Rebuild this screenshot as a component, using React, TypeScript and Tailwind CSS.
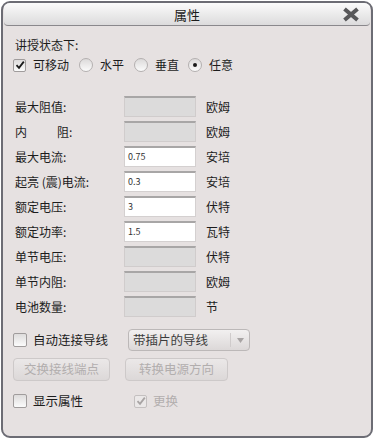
import type { ReactNode } from 'react'

const font = { fontFamily: '"Noto Sans CJK SC", "Noto Sans", sans-serif' }

type Field = {
  label: ReactNode
  value?: string
  unit: string
}

const fields: Field[] = [
  { label: '最大阻值:', unit: '欧姆' },
  {
    label: (
      <>
        <span className="mr-[30px]">内</span>阻:
      </>
    ),
    unit: '欧姆',
  },
  { label: '最大电流:', value: '0.75', unit: '安培' },
  { label: '起亮 (震)电流:', value: '0.3', unit: '安培' },
  { label: '额定电压:', value: '3', unit: '伏特' },
  { label: '额定功率:', value: '1.5', unit: '瓦特' },
  { label: '单节电压:', unit: '伏特' },
  { label: '单节内阻:', unit: '欧姆' },
  { label: '电池数量:', unit: '节' },
]

function CheckBox({
  checked,
  disabled,
  big,
}: {
  checked?: boolean
  disabled?: boolean
  big?: boolean
}) {
  return (
    <span
      className={`flex shrink-0 items-center justify-center rounded-[2px] border ${
        big ? 'h-[14px] w-[14px]' : 'h-[13px] w-[13px]'
      } ${
        disabled
          ? 'border-[#c4c0c0] bg-[#ebe8e8]'
          : 'border-[#a09c9c] bg-gradient-to-b from-[#dedcdc] to-[#fbfbfb]'
      }`}
    >
      {checked ? (
        <svg width="10" height="10" viewBox="0 0 10 10">
          <path
            d="M1.5 5.2 L4 7.8 L8.8 1.6"
            fill="none"
            stroke={disabled ? '#a8a4a4' : '#1a1a1a'}
            strokeWidth="1.8"
          />
        </svg>
      ) : null}
    </span>
  )
}

function Radio({ checked }: { checked?: boolean }) {
  return (
    <span className="flex h-[14px] w-[14px] shrink-0 items-center justify-center rounded-full border border-[#b4b0b0] bg-gradient-to-b from-[#dcdada] to-[#fbfbfb]">
      {checked ? <span className="h-[4px] w-[4px] rounded-full bg-[#1a1a1a]" /> : null}
    </span>
  )
}

export default function App() {
  return (
    <div className="h-[439px] w-[374px] bg-white p-px" style={font}>
      <div className="flex h-full flex-col overflow-hidden rounded-[9px] border-2 border-[#6c6c74] bg-[#e6e1e1] text-[12px] text-[#1c1c1c]">
        <div className="relative mx-px flex h-[23px] shrink-0 items-center justify-center rounded-b-[4px] border-b border-[#8a888c] bg-gradient-to-b from-[#fbfbfb] to-[#dcdbdc]">
          <span className="text-[13px] leading-none text-[#1c1c1c]">属性</span>
          <svg
            className="absolute right-[10px] top-[4px]"
            width="18"
            height="15"
            viewBox="0 0 18 15"
          >
            <path d="M2.5 2 L15.5 13 M15.5 2 L2.5 13" stroke="#58585a" strokeWidth="4" />
          </svg>
        </div>

        <div className="flex flex-col pl-[10px] pt-[11px]">
          <div className="ml-[2px] h-[15px] leading-[15px]">讲授状态下:</div>

          <div className="mt-[5px] flex h-[16px] items-center">
            <CheckBox checked />
            <span className="ml-[7px]">可移动</span>
            <span className="ml-[10px]">
              <Radio />
            </span>
            <span className="ml-[7px]">水平</span>
            <span className="ml-[10px]">
              <Radio />
            </span>
            <span className="ml-[7px]">垂直</span>
            <span className="ml-[9px]">
              <Radio checked />
            </span>
            <span className="ml-[7px]">任意</span>
          </div>

          <div className="mt-[23px] flex flex-col gap-[4px]">
            {fields.map((f, i) => (
              <div key={i} className="flex h-[21px] items-center">
                <span className="ml-[2px] w-[109px] shrink-0">{f.label}</span>
                <div
                  className={`flex h-[21px] w-[72px] items-center border border-t-2 px-[3px] text-[9px] ${
                    f.value !== undefined
                      ? 'border-[#d4d0d0] border-t-[#a8a6a6] bg-white text-[#333]'
                      : 'border-[#d0cccc] border-t-[#a8a6a6] bg-[#dcdbdb]'
                  }`}
                >
                  {f.value}
                </div>
                <span className="ml-[10px]">{f.unit}</span>
              </div>
            ))}
          </div>

          <div className="mt-[12px] flex h-[22px] items-center">
            <CheckBox big />
            <span className="ml-[6px] text-[12.5px]">自动连接导线</span>
            <div className="ml-[20px] flex h-[22px] w-[122px] items-center rounded-[4px] border border-[#bcb8b8] bg-gradient-to-b from-[#f2f0f0] to-[#dcd8d8]">
              <span className="flex-1 pl-[4px] text-[12.5px] text-[#3c3c3c]">带插片的导线</span>
              <span className="h-[14px] w-px bg-[#cfcbcb]" />
              <span className="flex w-[18px] justify-center">
                <svg width="7" height="5" viewBox="0 0 7 5">
                  <path d="M0 0 L7 0 L3.5 5 Z" fill="#a8a4a4" />
                </svg>
              </span>
            </div>
          </div>

          <div className="mt-[7px] flex h-[23px] items-center">
            <div className="flex h-[23px] w-[97px] items-center justify-center rounded-[4px] border border-[#cdc9c9] bg-gradient-to-b from-[#ebe8e8] to-[#dcd8d8] text-[12.5px] text-[#b2aeae]">
              交换接线端点
            </div>
            <div className="ml-[15px] flex h-[23px] w-[103px] items-center justify-center rounded-[4px] border border-[#cdc9c9] bg-gradient-to-b from-[#ebe8e8] to-[#dcd8d8] text-[12.5px] text-[#b2aeae]">
              转换电源方向
            </div>
          </div>

          <div className="mt-[12px] flex h-[16px] items-center">
            <CheckBox big />
            <span className="ml-[6px] text-[12.5px]">显示属性</span>
            <span className="ml-[51px]">
              <CheckBox checked disabled />
            </span>
            <span className="ml-[6px] text-[12.5px] text-[#b2aeae]">更换</span>
          </div>
        </div>
      </div>
    </div>
  )
}
